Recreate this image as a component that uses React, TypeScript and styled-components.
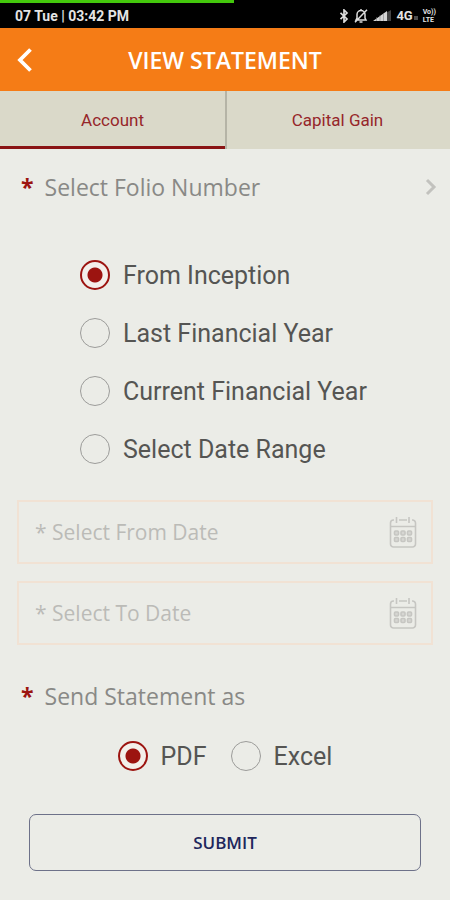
import React, { useState } from 'react';
import styled, { createGlobalStyle } from 'styled-components';

const GlobalStyle = createGlobalStyle`
  *, *::before, *::after { box-sizing: border-box; }
  body { margin: 0; background: #ebece7; }
  button, input { font: inherit; margin: 0; }
`;

const sans = "'Open Sans', 'Noto Sans', sans-serif";
const roboto = "Roboto, 'Liberation Sans', sans-serif";
const red = '#9c1410';

const Screen = styled.div`
  display: flex;
  flex-direction: column;
  min-height: 100vh;
  background: #ebece7;
  font-family: ${sans};
`;

const ProgressTrack = styled.div`
  height: 3px;
  background: #000;
`;

const ProgressFill = styled.div`
  height: 100%;
  width: 52%;
  background: #43c80c;
`;

const StatusBar = styled.div`
  display: flex;
  align-items: center;
  justify-content: space-between;
  height: 25px;
  padding: 0 14px 0 15px;
  background: #000;
  color: #e4e4e4;
  font: 700 14px/22px ${roboto};
`;

const StatusIcons = styled.div`
  display: flex;
  align-items: center;
  gap: 5px;
`;

const NetworkLabel = styled.span`
  display: flex;
  align-items: center;
  gap: 1px;
  font-size: 13px;
  &::after {
    content: '';
    width: 4px;
    height: 4px;
    margin-top: 4px;
    background: #4c4c4c;
  }
`;

const VolteLabel = styled.span`
  display: flex;
  flex-direction: column;
  font: 700 7px/8px ${roboto};
`;

const Header = styled.header`
  display: grid;
  grid-template-columns: 50px 1fr 50px;
  align-items: center;
  height: 63px;
  background: #f57c16;
  color: #fff;
`;

const BackButton = styled.button`
  display: flex;
  align-items: center;
  justify-content: center;
  height: 100%;
  padding: 0;
  border: 0;
  background: none;
  color: inherit;
`;

const Title = styled.h1`
  margin: 0;
  text-align: center;
  font-size: 23px;
  line-height: 32px;
  font-weight: 600;
`;

const Tabs = styled.div`
  display: grid;
  grid-template-columns: 1fr 1fr;
  height: 58px;
  background: #dad9c9;
`;

const Tab = styled.button<{ $active: boolean }>`
  padding: 3px 0 0;
  border: 0;
  border-bottom: 3px solid ${({ $active }) => ($active ? '#8a1414' : 'transparent')};
  background: none;
  color: #96262a;
  font-family: ${roboto};
  font-size: 17px;
  line-height: 24px;
  & + & { background: linear-gradient(#b5b4a6, #b5b4a6) left / 2px 100% no-repeat border-box; }
`;

const Form = styled.form`
  display: flex;
  flex-direction: column;
`;

const FolioButton = styled.button`
  display: flex;
  align-items: center;
  justify-content: space-between;
  height: 75px;
  padding: 0 13px 0 21px;
  border: 0;
  background: none;
  text-align: left;
`;

const SectionLabel = styled.span`
  display: flex;
  align-items: center;
  gap: 11px;
  color: #898986;
  font-size: 23px;
  line-height: 30px;
`;

const Required = styled.span`
  color: ${red};
  font-weight: 700;
`;

const Group = styled.fieldset`
  min-width: 0;
  margin: 0;
  padding: 0;
  border: 0;
`;

const PeriodList = styled.div`
  display: flex;
  flex-direction: column;
  gap: 26px;
  padding: 35px 20px 35px 80px;
`;

const FormatList = styled.div`
  display: flex;
  justify-content: center;
  gap: 24px;
  padding: 29px 20px 42px;
`;

const RadioLabel = styled.label`
  display: flex;
  align-items: center;
  gap: 13px;
  color: #555553;
  font: 400 25px/30px ${roboto};
`;

const RadioText = styled.span`
  padding-top: 2px;
`;

const Radio = styled.input`
  appearance: none;
  flex: none;
  width: 30px;
  height: 30px;
  border: 1px solid #9c9c9a;
  border-radius: 50%;
  background: transparent;
  &:checked {
    border: 2px solid ${red};
    background: radial-gradient(circle, ${red} 7px, #f3efea 8px);
  }
`;

const DateFields = styled.div`
  display: flex;
  flex-direction: column;
  gap: 17px;
  padding: 0 17px;
`;

const DateBox = styled.div`
  display: flex;
  align-items: center;
  height: 64px;
  padding: 0 14px 0 16px;
  border: 2px solid #f1e2d4;
`;

const DateInput = styled.input`
  flex: 1;
  min-width: 0;
  height: 100%;
  padding: 0;
  border: 0;
  background: none;
  color: #858582;
  font-size: 21px;
  outline: none;
  &::placeholder { color: #bbbbb7; opacity: 1; }
`;

const IconButton = styled.button`
  display: flex;
  padding: 0;
  border: 0;
  background: none;
`;

const Legend = styled.legend`
  padding: 36px 21px 0;
`;

const SubmitButton = styled.button`
  height: 57px;
  margin: 0 29px;
  border: 1px solid #6d7189;
  border-radius: 7px;
  background: none;
  color: #20265c;
  font-size: 17px;
  line-height: 24px;
  font-weight: 600;
`;

const BluetoothIcon = () => (
  <svg width="10" height="14" viewBox="0 0 10 14" fill="none" stroke="#ddd" strokeWidth="1.7" aria-hidden="true">
    <path d="M1.5 3.8 8 10l-3 3V1l3 3-6.500 6.200" />
  </svg>
);

const MutedBellIcon = () => (
  <svg width="14" height="14" viewBox="0 0 14 14" fill="none" stroke="#ddd" strokeWidth="1.5" aria-hidden="true">
    <path d="M2 11h10l-1-2V5.500a4 4 0 0 0-8 0V9zM5.500 13h3M7 1V0M13 .8 1 13.200" />
  </svg>
);

const SignalIcon = () => (
  <svg width="18" height="13" viewBox="0 0 18 13" aria-hidden="true">
    <path d="M14 3.300 18 1v11h-4z" fill="#444" />
    <path d="M0 12 14 2v10z" fill="#d4d4d4" />
    <path d="M3.500 8v4M7 6v6M10.500 4v8" stroke="#777" strokeWidth=".5" />
  </svg>
);

const BackIcon = () => (
  <svg width="16" height="24" viewBox="0 0 16 24" fill="none" stroke="#fff" strokeWidth="3.800" aria-hidden="true">
    <path d="M13.500 1.500 3 12l10.500 10.500" />
  </svg>
);

const ChevronIcon = () => (
  <svg width="12" height="18" viewBox="0 0 12 18" fill="none" stroke="#c2c2be" strokeWidth="3" aria-hidden="true">
    <path d="m2 2 7 7-7 7" />
  </svg>
);

const CalendarIcon = () => (
  <svg width="28" height="32" viewBox="0 0 28 32" fill="none" stroke="#c6c6c2" strokeWidth="1.6" aria-hidden="true">
    <path d="M5 4H4.500A3 3 0 0 0 1.500 7v21a3 3 0 0 0 3 3h19a3 3 0 0 0 3-3V7a3 3 0 0 0-3-3H23M10 4h8M7.500 1v6M20 1v6M1.500 10.500h25" />
    {[15, 21.500].map((y) =>
      [5.500, 12, 18.500].map((x) => (
        <rect key={`${x}-${y}`} x={x} y={y} width="4" height="4" rx="1" fill="#d6d6d2" />
      )),
    )}
  </svg>
);

const periods = ['From Inception', 'Last Financial Year', 'Current Financial Year', 'Select Date Range'];
const formats = ['PDF', 'Excel'];
const tabs = ['Account', 'Capital Gain'];
const dates = ['Select From Date', 'Select To Date'];

export default function App() {
  const [tab, setTab] = useState(tabs[0]);
  const [period, setPeriod] = useState(periods[0]);
  const [format, setFormat] = useState(formats[0]);

  return (
    <>
      <GlobalStyle />
      <Screen>
        <ProgressTrack><ProgressFill /></ProgressTrack>
        <StatusBar>
          <span>07 Tue | 03:42 PM</span>
          <StatusIcons>
            <BluetoothIcon />
            <MutedBellIcon />
            <SignalIcon />
            <NetworkLabel>4G</NetworkLabel>
            <VolteLabel><span>Vo))</span><span>LTE</span></VolteLabel>
          </StatusIcons>
        </StatusBar>
        <Header>
          <BackButton type="button" aria-label="Back"><BackIcon /></BackButton>
          <Title>VIEW STATEMENT</Title>
        </Header>
        <Tabs role="tablist">
          {tabs.map((name) => (
            <Tab key={name} type="button" role="tab" aria-selected={tab === name} $active={tab === name} onClick={() => setTab(name)}>
              {name}
            </Tab>
          ))}
        </Tabs>
        <Form onSubmit={(event) => event.preventDefault()}>
          <FolioButton type="button">
            <SectionLabel><Required>*</Required>Select Folio Number</SectionLabel>
            <ChevronIcon />
          </FolioButton>
          <Group aria-label="Statement period">
            <PeriodList>
              {periods.map((name) => (
                <RadioLabel key={name}>
                  <Radio type="radio" name="period" checked={period === name} onChange={() => setPeriod(name)} />
                  <RadioText>{name}</RadioText>
                </RadioLabel>
              ))}
            </PeriodList>
          </Group>
          <DateFields>
            {dates.map((name) => (
              <DateBox key={name}>
                <DateInput type="text" aria-label={name} placeholder={`* ${name}`} />
                <IconButton type="button" aria-label={`${name}, open calendar`}><CalendarIcon /></IconButton>
              </DateBox>
            ))}
          </DateFields>
          <Group>
            <Legend><SectionLabel><Required>*</Required>Send Statement as</SectionLabel></Legend>
            <FormatList>
              {formats.map((name) => (
                <RadioLabel key={name}>
                  <Radio type="radio" name="format" checked={format === name} onChange={() => setFormat(name)} />
                  <RadioText>{name}</RadioText>
                </RadioLabel>
              ))}
            </FormatList>
          </Group>
          <SubmitButton type="submit">SUBMIT</SubmitButton>
        </Form>
      </Screen>
    </>
  );
}
